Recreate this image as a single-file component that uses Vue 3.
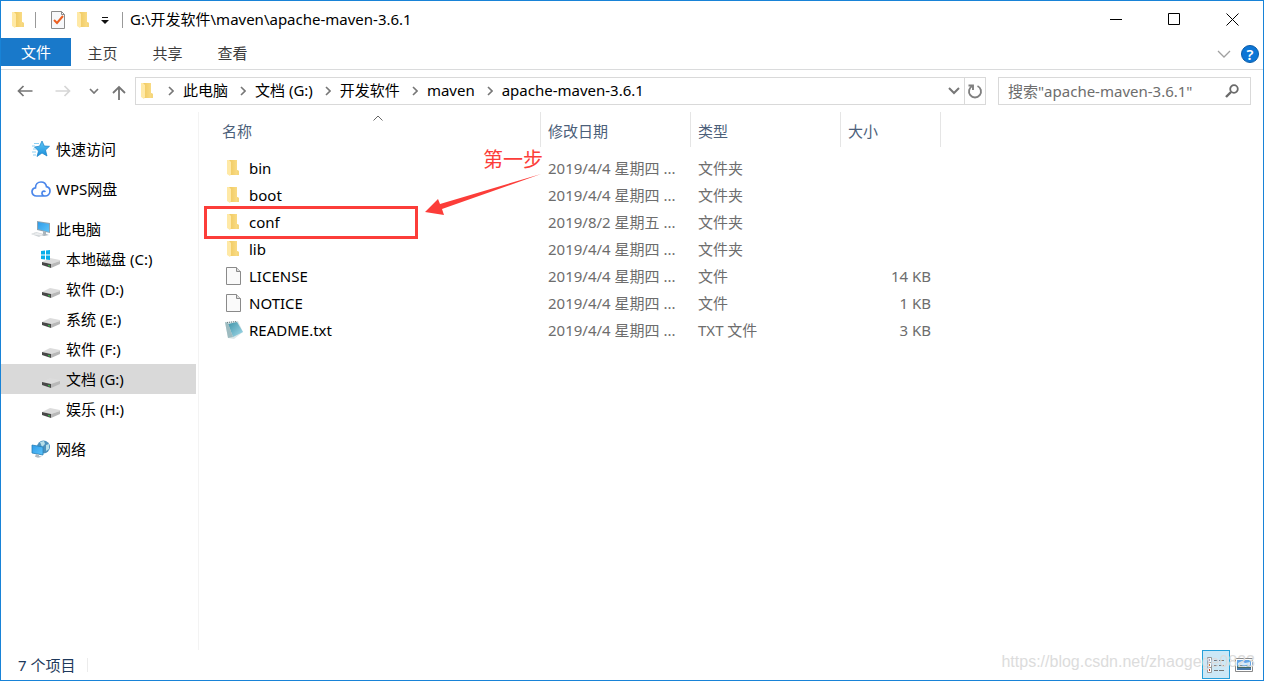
<script setup>
const crumbs = ['此电脑', '文档 (G:)', '开发软件', 'maven', 'apache-maven-3.6.1']
const tabs = ['主页', '共享', '查看']
const drives = [
  { name: '本地磁盘 (C:)', system: true },
  { name: '软件 (D:)' },
  { name: '系统 (E:)' },
  { name: '软件 (F:)' },
  { name: '文档 (G:)', active: true },
  { name: '娱乐 (H:)' }
]
const files = [
  { name: 'bin', icon: 'folder', date: '2019/4/4 星期四 ...', type: '文件夹', size: '' },
  { name: 'boot', icon: 'folder', date: '2019/4/4 星期四 ...', type: '文件夹', size: '' },
  { name: 'conf', icon: 'folder', date: '2019/8/2 星期五 ...', type: '文件夹', size: '', marked: true },
  { name: 'lib', icon: 'folder', date: '2019/4/4 星期四 ...', type: '文件夹', size: '' },
  { name: 'LICENSE', icon: 'page', date: '2019/4/4 星期四 ...', type: '文件', size: '14 KB' },
  { name: 'NOTICE', icon: 'page', date: '2019/4/4 星期四 ...', type: '文件', size: '1 KB' },
  { name: 'README.txt', icon: 'note', date: '2019/4/4 星期四 ...', type: 'TXT 文件', size: '3 KB' }
]
</script>

<template>
  <div class="window">
    <svg class="defs" width="0" height="0" aria-hidden="true">
      <defs>
        <linearGradient id="gold" x1="0" x2="1"><stop offset="0" stop-color="#f0c95f" /><stop offset="1" stop-color="#fbdf8d" /></linearGradient>
        <linearGradient id="screen" x1="0" x2="1" y2="1"><stop offset="0" stop-color="#2f9be8" /><stop offset="1" stop-color="#5cc4fb" /></linearGradient>
        <linearGradient id="star" x2="0" y2="1"><stop offset="0" stop-color="#5fc6f5" /><stop offset="1" stop-color="#1a8fdc" /></linearGradient>
        <linearGradient id="pad" x1="0" x2="1" y2="1"><stop offset="0" stop-color="#3f93a8" /><stop offset="1" stop-color="#a5dcec" /></linearGradient>
        <symbol id="folder" viewBox="0 0 14 18">
          <path d="M3 1h8v10l2 1v4H3z" fill="url(#gold)" />
          <path d="M1 1h2l2 2v12l-1 2-3-2z" fill="#ffe9a6" />
          <path d="M11 11l2 1v4h-2z" fill="#f5d67c" />
        </symbol>
        <symbol id="drive" viewBox="0 0 20 12">
          <path d="M1 6l8-4 10 2v1l-9 3z" fill="#dcdcdc" />
          <path d="M1 6l9 2v4L1 9z" fill="#484848" />
          <path d="M10 8l9-3v3l-9 4z" fill="#b8b8b8" />
          <path d="M7 9l2 .5v1l-2-.5z" fill="#35d04a" />
        </symbol>
      </defs>
    </svg>

    <header class="titlebar">
      <svg class="folder" aria-hidden="true"><use href="#folder" /></svg>
      <span class="bar first"></span>
      <button class="quick" aria-label="属性">
        <svg width="16" height="20" viewBox="0 0 16 20"><path d="M1.500 1.500h10l3 3v14h-13z" fill="#f7f8fa" stroke="#8c8c8c" /><path d="M11.500 1.500v3h3" fill="none" stroke="#8c8c8c" /><path d="M4 10l3 3 6-7" fill="none" stroke="#ec5f20" stroke-width="2" /></svg>
      </button>
      <button class="quick" aria-label="新建文件夹"><svg class="folder"><use href="#folder" /></svg></button>
      <button class="quick custom" aria-label="自定义快速访问工具栏">
        <svg width="8" height="8" viewBox="0 0 8 8"><path d="M1 0h6v1H1zM0 3h8L4 7z" fill="#111" /></svg>
      </button>
      <span class="bar"></span>
      <h1>G:\开发软件\maven\apache-maven-3.6.1</h1>
      <div class="controls">
        <button aria-label="最小化"><svg width="13" height="13"><path d="M0 6.500h12" stroke="#000" /></svg></button>
        <button aria-label="最大化"><svg width="13" height="13"><path d="M.5.5h11v11H.5z" fill="none" stroke="#000" /></svg></button>
        <button aria-label="关闭"><svg width="13" height="13"><path d="M.5.5l12 12M12.500.5l-12 12" stroke="#000" /></svg></button>
      </div>
    </header>

    <nav class="ribbon">
      <button class="file">文件</button>
      <button v-for="t in tabs" :key="t" class="tab">{{ t }}</button>
      <button class="expand" aria-label="展开功能区"><svg width="14" height="8"><path d="M1 1l6 6 6-6" fill="none" stroke="#a0a0a0" stroke-width="1.300" /></svg></button>
      <button class="help" aria-label="帮助">?</button>
    </nav>

    <div class="toolbar">
      <button class="nav" aria-label="后退"><svg width="16" height="12"><path d="M15.500 6H1.500M6.500 1l-5 5 5 5" fill="none" stroke="#757575" stroke-width="1.700" /></svg></button>
      <button class="nav forward" aria-label="前进"><svg width="16" height="12"><path d="M.5 6h14M9.500 1l5 5-5 5" fill="none" stroke="#d6d6d6" stroke-width="1.700" /></svg></button>
      <button class="nav recent" aria-label="最近的位置"><svg width="10" height="6"><path d="M1 1l4 4 4-4" fill="none" stroke="#777" stroke-width="1.700" /></svg></button>
      <button class="nav up" aria-label="上移"><svg width="14" height="15"><path d="M7 15V2M1 8l6-6 6 6" fill="none" stroke="#757575" stroke-width="1.800" /></svg></button>
      <div class="address">
        <svg class="folder" aria-hidden="true"><use href="#folder" /></svg>
        <template v-for="c in crumbs" :key="c">
          <svg class="chev" width="6" height="10" aria-hidden="true"><path d="M1 1l4 4-4 4" fill="none" stroke="#777" stroke-width="1.600" /></svg>
          <a href="#" class="crumb">{{ c }}</a>
        </template>
        <button class="drop" aria-label="以前的位置"><svg width="12" height="8"><path d="M1 1l5 5 5-5" fill="none" stroke="#777" stroke-width="2" /></svg></button>
        <button class="refresh" aria-label="刷新">
          <svg width="16" height="16"><path d="M10.500 3a6 6 0 1 1-5 0M1.500 2.500H6V7" fill="none" stroke="#808080" stroke-width="1.900" /></svg>
        </button>
      </div>
      <div class="search">
        <input type="text" aria-label="搜索" placeholder="搜索&quot;apache-maven-3.6.1&quot;" />
        <svg width="14" height="14" aria-hidden="true"><circle cx="9" cy="5" r="3.800" fill="none" stroke="#6a6a6a" stroke-width="1.800" /><path d="M6 8l-5 5" stroke="#6a6a6a" stroke-width="2.400" /></svg>
      </div>
    </div>

    <main class="body">
      <aside>
        <a href="#" class="node">
          <svg width="20" height="18" viewBox="0 0 20 18"><path d="M11 1l2.300 5 5.200.3-4 3.700 1.500 6-5-3-5 3.500L7.500 11 3.500 7l5-.8z" fill="url(#star)" stroke="#187fc4" stroke-width=".7" /><path d="M3 3.500h5M1 6h3M2 9h3M1 12h4M2 15h3" stroke="#8ed0f2" /></svg>
          快速访问</a>
        <a href="#" class="node">
          <svg width="20" height="18" viewBox="0 0 20 18"><path d="M13 16H5.500C3 16 1 14.300 1 11.800c0-2.200 1.500-3.700 3.500-4C4.500 4.500 6.800 2 10 2c3 0 5 2 5.500 4.700C17.700 7.200 19 9 19 11c0 3-2.300 5-5 5-2.600 0-3.500-2.200-2.800-3.800.6-1.400 2.500-1.500 3-.2" fill="none" stroke="#4a86ea" stroke-width="1.700" /></svg>
          WPS网盘</a>
        <a href="#" class="node">
          <svg width="20" height="18" viewBox="0 0 20 18"><path d="M6 1l13 2v10L6 10z" fill="#8fa3b0" /><path d="M7 2l11 2v8L7 9z" fill="url(#screen)" /><path d="M12 11l3 1v2l3 1-5 1-3-1 2-1z" fill="#aab4bb" /><path d="M0 14l5-2 8 2-5 3z" fill="#d0d5d8" /><path d="M2 14l8 1M4 13l7 1.500" stroke="#fff" stroke-width=".6" /></svg>
          此电脑</a>
        <a v-for="d in drives" :key="d.name" href="#" class="node drive" :class="{ active: d.active }">
          <svg width="20" height="18" viewBox="0 0 20 18"><use href="#drive" y="6" width="20" height="12" /><path v-if="d.system" d="M0 1l4-.5v4H0zM5 .4L9 0v4.500H5zM0 5.500h4v4L0 9zM5 5.500h4V10l-4-.5z" fill="#08aeea" /></svg>
          {{ d.name }}</a>
        <a href="#" class="node">
          <svg width="20" height="18" viewBox="0 0 20 18"><circle cx="12.500" cy="7" r="6.500" fill="#4c91bd" /><path d="M9 2l4-1 1 3-3 3zM15 5l3-1v5l-3 2z" fill="#b7dfe9" /><path d="M1 5l11 2v8L1 13z" fill="url(#screen)" stroke="#2680b8" stroke-width=".8" /><path d="M5 14l3 .6v1.400l3 .7-4 1-3-1z" fill="#aebac2" /></svg>
          网络</a>
      </aside>

      <section class="content">
        <table>
          <colgroup><col class="c-name" /><col class="c-date" /><col class="c-type" /><col class="c-size" /></colgroup>
          <thead>
            <tr>
              <th class="sorted">名称<svg width="10" height="6" aria-hidden="true"><path d="M.5 5.500L5 1l4.500 4.500" fill="none" stroke="#666" /></svg></th>
              <th>修改日期</th><th>类型</th><th>大小</th>
            </tr>
          </thead>
          <tbody>
            <tr v-for="f in files" :key="f.name">
              <td class="name" :class="{ marked: f.marked }">
                <div>
                  <svg v-if="f.icon === 'folder'" class="folder" aria-hidden="true"><use href="#folder" /></svg>
                  <svg v-else-if="f.icon === 'page'" width="20" height="20" aria-hidden="true"><path d="M2.500 1.500h10l4 4v13h-14z" fill="#fafafa" stroke="#8a8a8a" /><path d="M12.500 1.500v4h4" fill="#ddd" stroke="#8a8a8a" /></svg>
                  <svg v-else width="20" height="20" aria-hidden="true"><path d="M1 2l13-1 5 11-9 7-6-1z" fill="#dbe6e8" /><path d="M4 4l9-2 6 10-10 5z" fill="url(#pad)" /><path d="M1 2l3 1 5 14-5 1z" fill="#9dbbc0" /><path d="M3 2.500l10-1" stroke="#687a7d" stroke-dasharray="1 1" /></svg>
                  <span>{{ f.name }}</span>
                </div>
              </td>
              <td>{{ f.date }}</td><td>{{ f.type }}</td><td class="size">{{ f.size }}</td>
            </tr>
          </tbody>
        </table>
        <div class="callout">
          <span>第一步</span>
          <svg width="118" height="44" viewBox="0 0 118 44" aria-hidden="true"><path d="M0 40L13 27l2 5L116 2 17 37l2 6z" fill="#fc3d39" /></svg>
        </div>
      </section>
    </main>

    <footer>
      <span class="count">7 个项目</span>
      <span class="watermark">https://blog.csdn.net/zhaogege0823</span>
      <button class="view on" aria-label="详细信息">
        <svg width="20" height="18"><path d="M1.500 1.500h4v15h-4zM1.500 6.500h4M1.500 11.500h4" fill="#fff" stroke="#999" /><path d="M3 4h1" stroke="#4a78b8" stroke-width="2" /><path d="M3 9h1M3 14h1" stroke="#c43c25" stroke-width="2" /><path d="M8 4.500h4M13 4.500h5M8 9.500h4M13 9.500h5M8 14.500h4M13 14.500h5" stroke="#777" /></svg>
      </button>
      <button class="view" aria-label="大图标">
        <svg width="18" height="14"><path d="M.5.5h17v13H.5z" fill="#fff" stroke="#888" /><path d="M2 2h14v6H2z" fill="#64a6e7" /><path d="M3 5l4-2 3 2 5-1v3H3z" fill="#d6eaf9" /><path d="M2 8l4-1 4 2 6-1v4H2z" fill="#486b62" /><path d="M2 10h14v2H2z" fill="#4779ac" /></svg>
      </button>
    </footer>
  </div>
</template>

<style>
body { background: #fff; }
</style>

<style scoped>
*, *::after { box-sizing: border-box; }
.window {
  position: relative;
  display: flex;
  flex-direction: column;
  min-height: 100vh;
  border: 1px solid #1883d7;
  background: #fff;
  color: #000;
  font: 15px/20px "Noto Sans", "Noto Sans CJK SC", sans-serif;
}
.defs { position: absolute; }
svg { display: block; flex: none; }
button { border: 0; padding: 0; background: none; font: inherit; color: inherit; display: flex; align-items: center; justify-content: center; flex: none; }
a { color: inherit; text-decoration: none; }
.folder { width: 14px; height: 18px; }

.titlebar { display: flex; align-items: center; height: 37px; padding: 0 2px 0 10px; }
.bar { width: 1px; height: 16px; background: #999; margin-right: 7px; }
.bar.first { margin: 0 14px 0 10px; }
.quick { margin-right: 10px; }
.quick.custom { margin: 3px 13px 0 1px; }
h1 { flex: 1; margin: 0; padding-bottom: 2px; font: inherit; white-space: nowrap; }
.controls { display: flex; height: 100%; }
.controls button { width: 58px; }

.ribbon { display: flex; align-items: center; height: 32px; border-bottom: 1px solid #dadbdc; color: #3c3c3c; }
.ribbon .file { width: 70px; height: 28px; margin-bottom: 3px; background: #1979ca; color: #fff; }
.tab { width: 65px; height: 28px; padding: 0 2px 2px 0; }
.expand { margin-left: auto; margin-right: 10px; }
.help { width: 18px; height: 18px; margin-right: 4px; border-radius: 50%; border: 1px solid #0a5ca8; background: #0c76d6; color: #fff; font-weight: 600; line-height: 16px; }

.toolbar { display: flex; align-items: center; height: 42px; padding-right: 12px; }
.nav { margin-left: 16px; }
.nav.forward { margin-left: 22px; }
.nav.recent { margin-left: 18px; }
.nav.up { margin: 2px 9px 0 13px; }
.address { flex: 1; display: flex; align-items: center; height: 28px; border: 1px solid #d9d9d9; padding-left: 4px; white-space: nowrap; }
.crumb { padding-bottom: 2px; }
.chev { margin: 0 9px 0 12px; }
.address .folder + .chev { margin-left: 14px; }
.drop { margin-left: auto; width: 20px; height: 100%; }
.refresh { width: 21px; height: 100%; border-left: 1px solid #d9d9d9; }
.search { display: flex; align-items: center; width: 253px; height: 28px; margin-left: 12px; padding: 0 11px 0 9px; border: 1px solid #d9d9d9; }
.search input { flex: 1; min-width: 0; border: 0; padding: 0; outline: 0; font: inherit; background: none; }
.search input::placeholder { color: #6d6d6d; opacity: 1; }

.body { flex: 1; display: flex; }
aside { width: 198px; padding: 22px 2px 0 0; border-right: 1px solid #f3f3f3; }
.node { display: flex; align-items: center; gap: 5px; height: 30px; padding-left: 30px; margin-bottom: 10px; white-space: nowrap; }
.node:nth-child(3) { margin-bottom: 0; }
.drive { padding-left: 40px; margin-bottom: 0; gap: 5px; }
.drive + .node:not(.drive) { margin-top: 10px; }
.drive.active { background: #d9d9d9; }

.content { position: relative; flex: 1; }
table { border-collapse: separate; border-spacing: 0; table-layout: fixed; width: 742px; }
.c-name { width: 342px; }
.c-date, .c-type { width: 150px; }
.c-size { width: 100px; }
th { position: relative; height: 35px; padding: 2px 0 0 7px; border-right: 1px solid #e5e5e5; font-weight: 400; text-align: left; color: #4c607a; }
th.sorted { padding-left: 23px; }
th svg { position: absolute; left: 174px; top: 3px; }
tbody::before { content: ""; display: block; height: 7px; }
td { height: 27px; padding: 0 0 0 7px; color: #6d6d6d; white-space: nowrap; }
td.size { text-align: right; padding-right: 10px; }
td.name { position: relative; color: #000; padding-left: 25px; }
td.name div { display: flex; align-items: center; }
td.name svg { margin-right: 5px; }
td.name .folder { margin: 0 9px 0 2px; }
.marked::after { content: ""; position: absolute; left: 5px; top: -2px; width: 214px; height: 33px; border: 3px solid #fc3d39; }
.callout { position: absolute; left: 226px; top: 36px; color: #fc3d39; font-size: 20px; line-height: 24px; }
.callout span { display: block; margin-left: 58px; }

footer { display: flex; align-items: center; height: 30px; padding: 0 5px 1px 17px; color: #1e395b; }
.count { padding-right: 12px; border-right: 1px solid #ececec; line-height: 14px; }
.watermark { position: absolute; right: 8px; bottom: 8px; z-index: 1; font-size: 16px; color: #dcdcdc; font-family: "Liberation Sans", sans-serif; pointer-events: none; }
.view { width: 28px; height: 29px; }
.view.on { margin-left: auto; background: #cce8f6; border: 1px solid #26a0da; }
</style>
